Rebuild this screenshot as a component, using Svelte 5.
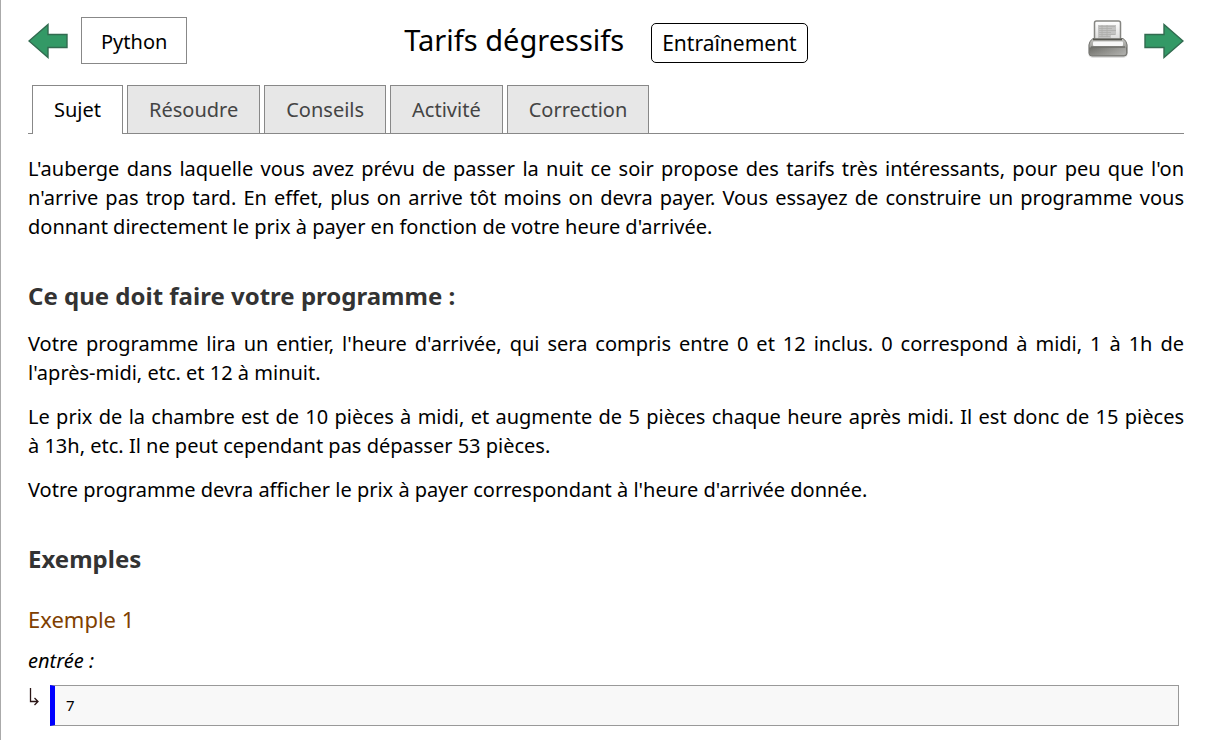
<script>
  const tabs = ['Sujet', 'Résoudre', 'Conseils', 'Activité', 'Correction'];
  let active = $state('Sujet');
</script>

<main>
  <header>
    <div class="side">
      <a class="nav" href="#precedent" aria-label="Précédent">
        <svg width="40" height="36" viewBox="0 0 40 36">
          <path d="M1 18 20 1.500V11.500H39V24.500H20V34.500Z" fill="#339966" stroke="#326b50" stroke-width="1.400" />
        </svg>
      </a>
      <button class="language" type="button">Python</button>
    </div>
    <div class="heading">
      <h1>Tarifs dégressifs</h1>
      <span class="badge">Entraînement</span>
    </div>
    <div class="side end">
      <a class="nav" href="#imprimer" aria-label="Imprimer">
        <svg width="40" height="42" viewBox="0 0 40 42">
          <defs>
            <linearGradient id="body" x1="0" y1="0" x2="0" y2="1">
              <stop offset="0" stop-color="#c4c4c1" />
              <stop offset="0.450" stop-color="#a4a4a0" />
              <stop offset="0.550" stop-color="#70706b" />
              <stop offset="1" stop-color="#8c8c87" />
            </linearGradient>
            <linearGradient id="shine" x1="0" y1="0" x2="1" y2="0">
              <stop offset="0" stop-color="#fff" stop-opacity="0" />
              <stop offset="1" stop-color="#fff" stop-opacity="0.350" />
            </linearGradient>
            <linearGradient id="sheet" x1="0" y1="0" x2="0" y2="1">
              <stop offset="0" stop-color="#fff" />
              <stop offset="1" stop-color="#dcdcdb" />
            </linearGradient>
          </defs>
          <rect x="0" y="21" width="40" height="17" rx="5" fill="#000" opacity="0.120" />
          <path d="M5 18.500H35Q39 21 39 25V33Q39 36 36 36H4Q1 36 1 33V25Q1 21 5 18.500Z" fill="url(#body)" stroke="#777773" />
          <path d="M2 27.500H38V33Q38 35 36 35H4Q2 35 2 33Z" fill="url(#shine)" />
          <path d="M6.500 19V3Q6.500 1 8.500 1H30.500Q32.500 1 32.500 3V19Z" fill="url(#sheet)" stroke="#858581" stroke-width="1.500" />
          <path d="M10 5H28V15H23V18H10Z" fill="#c3c3c2" />
          <path d="M11 6.500H27M11 8.500H24M11 10.500H28M11 12.500H23M11 14.500H27M11 16.500H22M14 5V17M19 5V17" stroke="#adadab" stroke-width="0.800" />
          <path d="M5 19.500H34" stroke="#55554f" stroke-width="1.600" />
          <rect x="5" y="21.500" width="30" height="4.500" rx="1" fill="#f7f7f7" />
          <path d="M3 27H37" stroke="#5b5b56" />
        </svg>
      </a>
      <a class="nav" href="#suivant" aria-label="Suivant">
        <svg width="40" height="36" viewBox="0 0 40 36">
          <path d="M39 18 20 1.500V11.500H1V24.500H20V34.500Z" fill="#339966" stroke="#326b50" stroke-width="1.400" />
        </svg>
      </a>
    </div>
  </header>

  <div class="tabs" role="tablist">
    {#each tabs as tab}
      <button
        type="button"
        role="tab"
        class:active={active === tab}
        aria-selected={active === tab}
        onclick={() => (active = tab)}>{tab}</button>
    {/each}
  </div>

  <article>
    <p>
      L'auberge dans laquelle vous avez prévu de passer la nuit ce soir propose des tarifs très
      intéressants, pour peu que l'on n'arrive pas trop tard. En effet, plus on arrive tôt moins on
      devra payer. Vous essayez de construire un programme vous donnant directement le prix à payer
      en fonction de votre heure d'arrivée.
    </p>

    <h2>Ce que doit faire votre programme :</h2>
    <p>
      Votre programme lira un entier, l'heure d'arrivée, qui sera compris entre 0 et 12 inclus. 0
      correspond à midi, 1 à 1h de l'après-midi, etc. et 12 à minuit.
    </p>
    <p>
      Le prix de la chambre est de 10 pièces à midi, et augmente de 5 pièces chaque heure après
      midi. Il est donc de 15 pièces à&nbsp;13h, etc. Il ne peut cependant pas dépasser 53 pièces.
    </p>
    <p>Votre programme devra afficher le prix à payer correspondant à l'heure d'arrivée donnée.</p>

    <h2>Exemples</h2>
    <h3>Exemple 1</h3>
    <div class="label">entrée :</div>
    <div class="sample">
      <svg width="12" height="20" viewBox="0 0 12 20" aria-hidden="true">
        <path d="M2.500 1V14.500H10M6.500 11 10 14.500 6.500 18" fill="none" stroke="#2b1616" stroke-width="1.300" />
      </svg>
      <pre>7</pre>
    </div>
  </article>
</main>

<style>
  :global(body) {
    margin: 0;
    background: #fff;
  }

  main {
    box-sizing: border-box;
    min-height: 100vh;
    padding: 17px 26px 14px 27px;
    border-left: 1px solid #aaa;
    font-family: 'Noto Sans', sans-serif;
    font-size: 20px;
    line-height: 29px;
    color: #000;
  }

  header {
    display: grid;
    grid-template-columns: 1fr auto 1fr;
    align-items: center;
  }

  .side {
    display: flex;
    align-items: center;
    gap: 13px;
  }

  .end {
    justify-content: flex-end;
    gap: 16px;
  }

  .nav,
  .nav svg {
    display: block;
  }

  button {
    font: inherit;
    cursor: pointer;
  }

  .language {
    padding: 9px 19px 7px;
    border: 1px solid #888;
    background: #fff;
    color: #000;
  }

  .heading {
    display: flex;
    align-items: baseline;
    gap: 27px;
    padding-top: 4px;
  }

  h1 {
    margin: 0;
    font-size: 29px;
    font-weight: 400;
    line-height: 32px;
  }

  .badge {
    padding: 4px 10px;
    border: 1px solid #000;
    border-radius: 5px;
    font-size: 21px;
    line-height: 30px;
  }

  .tabs {
    display: flex;
    gap: 4px;
    margin-top: 21px;
    padding: 0 4px;
    border-bottom: 1px solid #888;
  }

  .tabs button {
    padding: 9px 21px;
    border: 1px solid #888;
    border-bottom: 0;
    background: #e7e7e7;
    color: #444;
  }

  .tabs button.active {
    margin-bottom: -1px;
    padding-bottom: 10px;
    background: #fff;
    color: #000;
  }

  article {
    padding-top: 20px;
  }

  p {
    margin: 0 0 15px;
    text-align: justify;
  }

  h2 {
    margin: 37px 0 15px;
    font-size: 24px;
    font-weight: 700;
    line-height: 36px;
    color: #333;
  }

  h3 {
    margin: 26px 0 11px;
    font-size: 22px;
    font-weight: 400;
    line-height: 32px;
    color: #804000;
  }

  .label {
    font-style: italic;
  }

  .sample {
    display: flex;
    align-items: flex-start;
    gap: 10px;
    margin-top: 10px;
    padding-right: 5px;
  }

  .sample svg {
    margin-top: 2px;
  }

  pre {
    flex: 1;
    margin: 0;
    padding: 8px 11px;
    border: 1px solid #999;
    border-left: 5px solid #00f;
    background: #f8f8f8;
    font-family: 'Noto Sans', sans-serif;
    font-size: 15px;
    line-height: 23px;
  }
</style>
